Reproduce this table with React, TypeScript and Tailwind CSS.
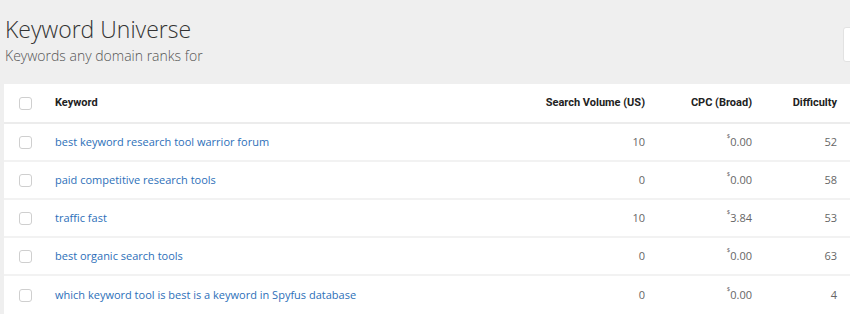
import React from 'react';

const rows = [
  { keyword: 'best keyword research tool warrior forum', volume: '10', cpc: '0.00', difficulty: '52' },
  { keyword: 'paid competitive research tools', volume: '0', cpc: '0.00', difficulty: '58' },
  { keyword: 'traffic fast', volume: '10', cpc: '3.84', difficulty: '53' },
  { keyword: 'best organic search tools', volume: '0', cpc: '0.00', difficulty: '63' },
  { keyword: 'which keyword tool is best is a keyword in Spyfus database', volume: '0', cpc: '0.00', difficulty: '4' },
];

function Checkbox() {
  return <span className="block w-[13px] h-[13px] rounded-[3px] border border-[#cfcfcf] bg-white" />;
}

export default function App() {
  return (
    <div className="w-[850px] h-[314px] overflow-hidden bg-[#efefef] font-['Open_Sans',sans-serif] relative">
      {/* page heading */}
      <div className="pl-[5px] pt-[15px]">
        <h1 className="text-[23px] leading-[29px] font-light text-[#333]">Keyword Universe</h1>
        <p className="mt-[2px] text-[14px] leading-[20px] font-light text-[#555]">Keywords any domain ranks for</p>
      </div>

      {/* toolbar box partially off screen */}
      <div className="absolute left-[843px] top-[27px] w-[40px] h-[35px] bg-white border border-[#e2e2e2] rounded-[3px]" />

      <div className="ml-[4px] mt-[18px] w-[846px] bg-white">
        <div className="flex items-center h-[40px] pt-[1px] border-b-2 border-[#ececec] font-['Roboto',sans-serif] text-[11px] font-bold text-[#222]">
          <div className="w-[51px] pl-[15px]"><Checkbox /></div>
          <div className="flex-1">Keyword</div>
          <div className="w-[140px] text-right">Search Volume (US)</div>
          <div className="w-[107px] text-right">CPC (Broad)</div>
          <div className="w-[85px] text-right">Difficulty</div>
          <div className="w-[13px]" />
        </div>
        {rows.map((r, i) => (
          <div
            key={i}
            className={`flex items-center h-[38px] text-[11px] ${i < rows.length - 1 ? 'border-b-2 border-[#f2f2f2]' : ''}`}
          >
            <div className="w-[51px] pl-[15px]"><Checkbox /></div>
            <div className="flex-1 text-[#2d6fb9]">{r.keyword}</div>
            <div className="w-[140px] text-right text-[#666]">{r.volume}</div>
            <div className="w-[107px] text-right text-[#666]">
              <sup className="text-[6px] align-[5px]">$</sup>{r.cpc}
            </div>
            <div className="w-[85px] text-right text-[#666]">{r.difficulty}</div>
            <div className="w-[13px]" />
          </div>
        ))}
      </div>
    </div>
  );
}
